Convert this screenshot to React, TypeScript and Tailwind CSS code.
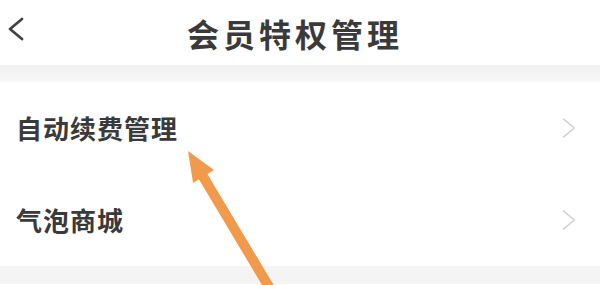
const rows = ['自动续费管理', '气泡商城'];

function Chevron({ dir, className }: { dir: 'left' | 'right'; className?: string }) {
  return (
    <svg className={className} viewBox="0 0 18 24" fill="none" stroke="currentColor" strokeLinecap="round" strokeLinejoin="round">
      <polyline points={dir === 'left' ? '15,2 3,12 15,22' : '3,2 15,12 3,22'} strokeWidth={dir === 'left' ? 2.8 : 1.8} />
    </svg>
  );
}

export default function App() {
  return (
    <div
      className="relative h-[285px] w-[600px] overflow-hidden bg-white text-[#333]"
      style={{ fontFamily: '"Noto Sans CJK SC", "Noto Sans", sans-serif' }}
    >
      <header className="relative flex h-[65px] items-center justify-center">
        <Chevron dir="left" className="absolute left-[7px] top-[17px] h-[24px] w-[18px] text-[#444]" />
        <h1 className="pr-[10px] text-[32px] font-bold leading-none tracking-[4px] text-[#3a3a3a]">会员特权管理</h1>
      </header>

      <div className="h-[17px] bg-gradient-to-b from-[#f1f1f1] to-[#f7f7f7]" />

      <ul>
        {rows.map((label) => (
          <li key={label} className="flex h-[92px] items-center justify-between pl-[16px] pr-[23px]">
            <span className="text-[26px] font-bold leading-none tracking-[1px] text-[#3a3a3a]">{label}</span>
            <Chevron dir="right" className="h-[22px] w-[16px] text-[#d2d2d2]" />
          </li>
        ))}
      </ul>

      <div className="h-[18px] bg-[#f4f4f4]" />

      <svg className="pointer-events-none absolute left-0 top-0" width="600" height="285" viewBox="0 0 600 285">
        <line x1="272" y1="292" x2="198" y2="168" stroke="#f29a4c" strokeWidth="10" strokeLinecap="round" />
        <polygon points="188,151 214,170 193,183" fill="#f29a4c" />
      </svg>
    </div>
  );
}
